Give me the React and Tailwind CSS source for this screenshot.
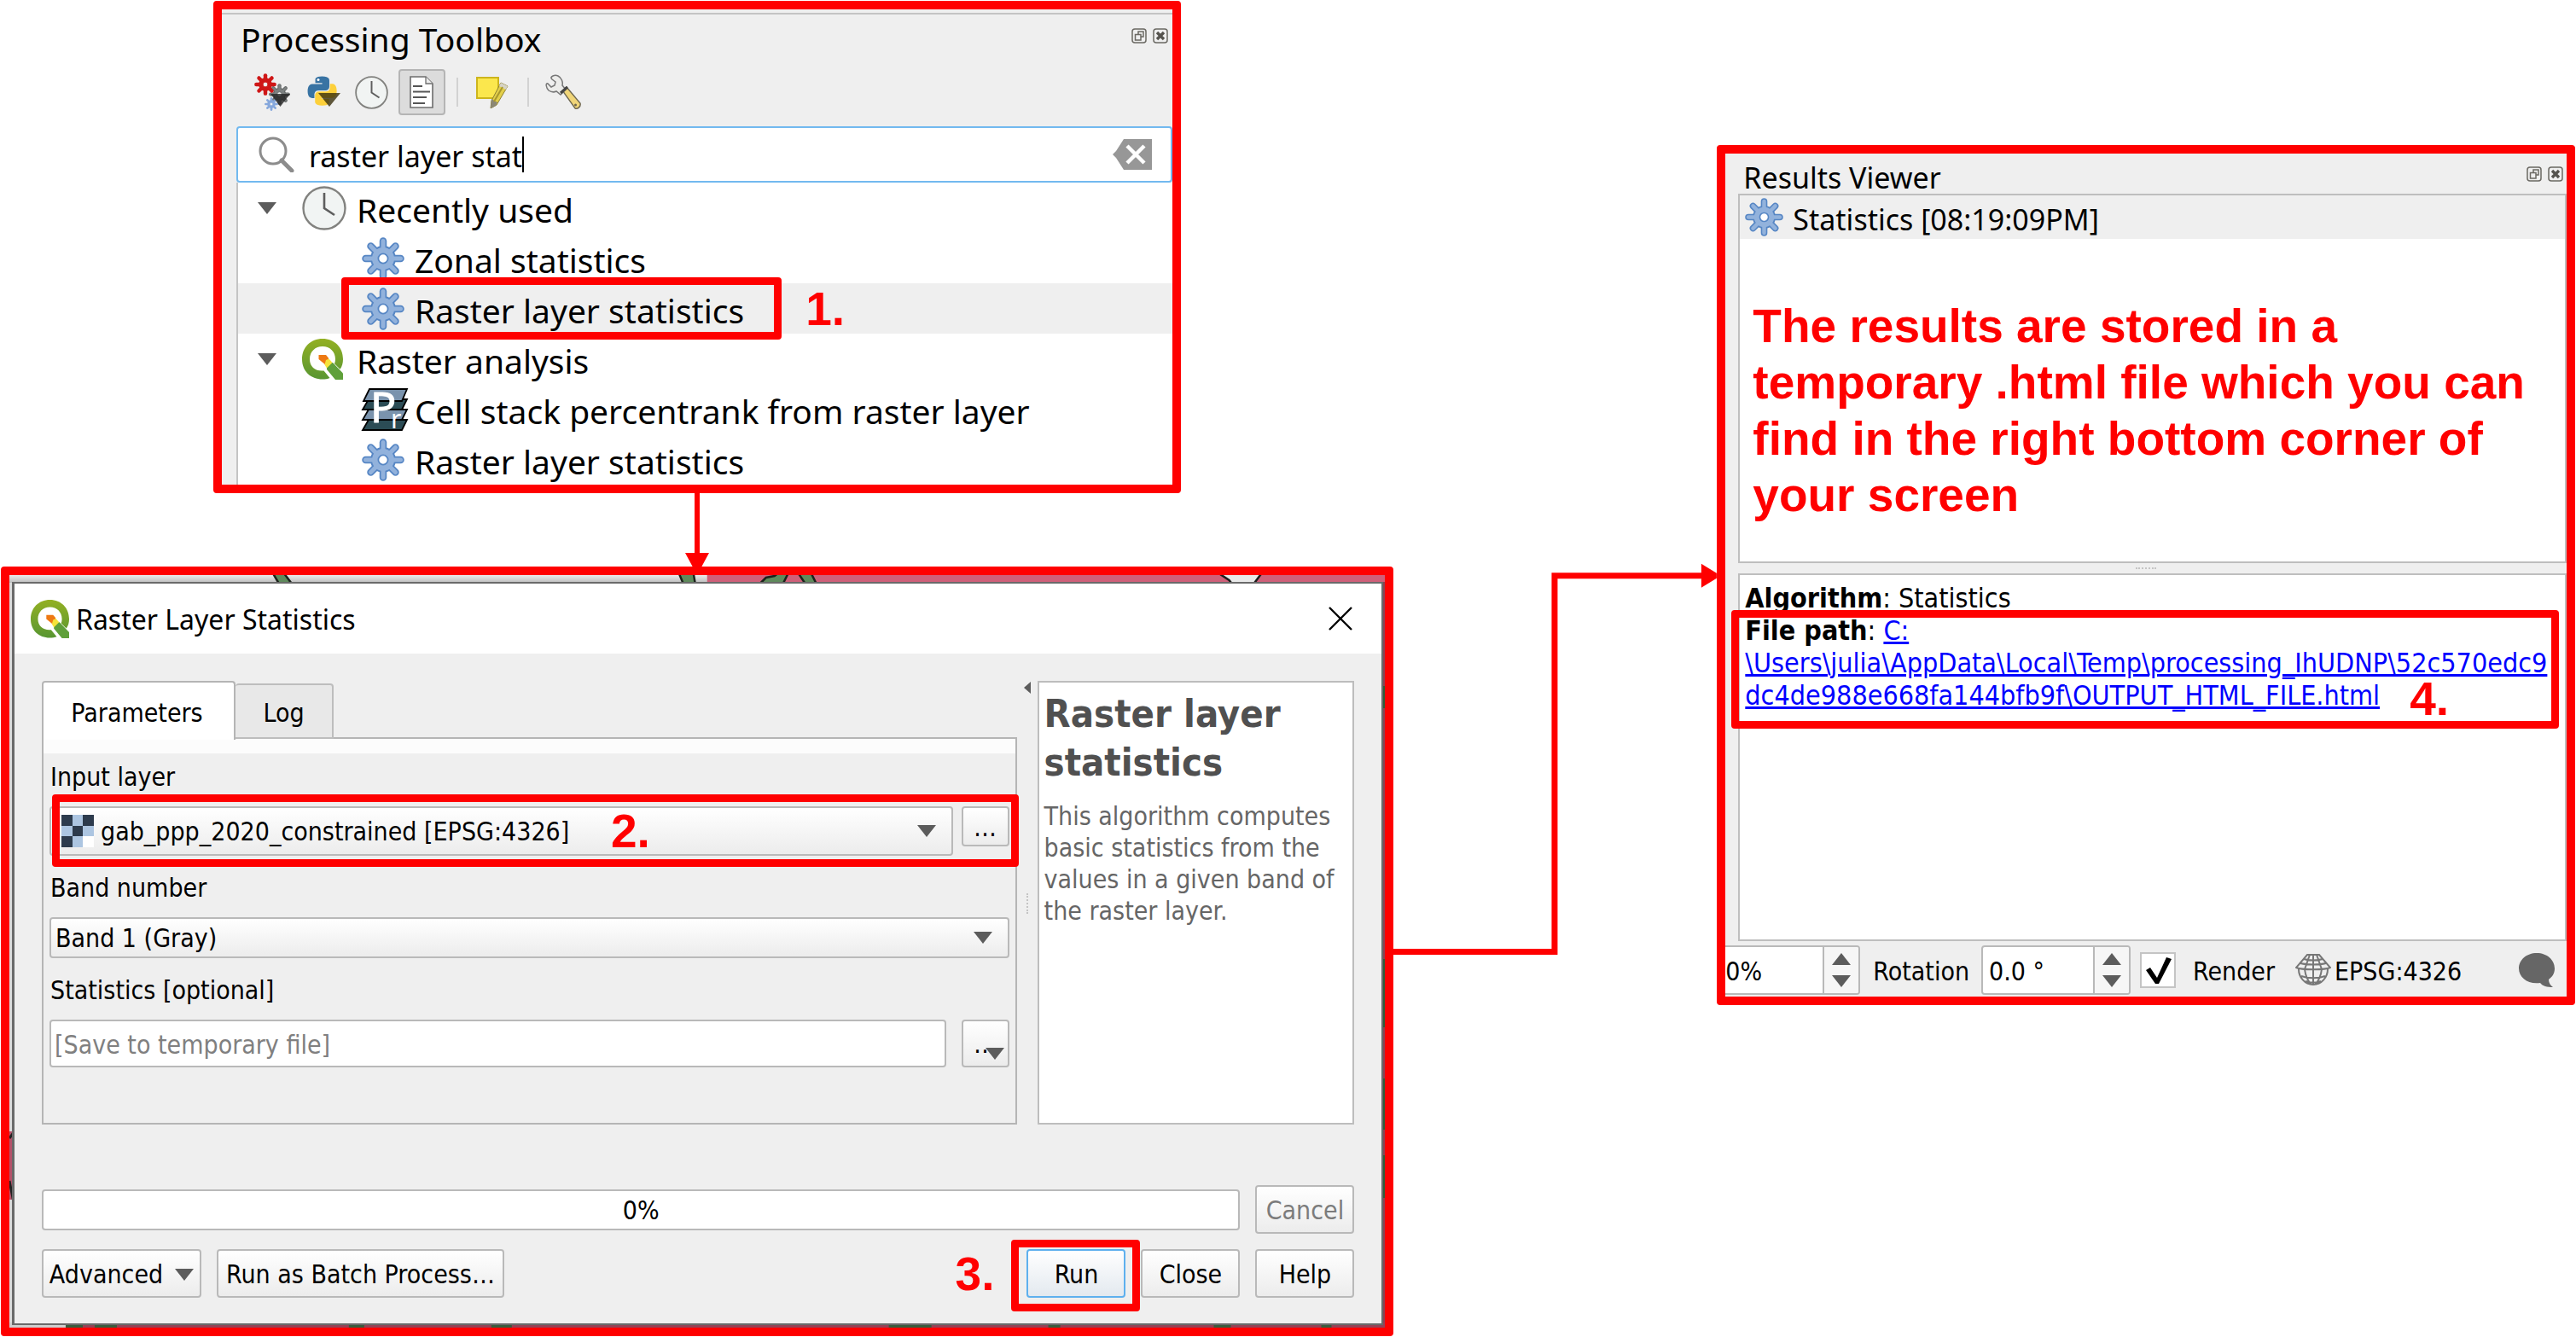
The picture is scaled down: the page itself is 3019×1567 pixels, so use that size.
import React from "react";

const UI = "font-['DejaVu_Sans_Condensed','DejaVu_Sans',sans-serif] text-[30px] leading-9";
const BTN =
  "flex h-[57px] items-center justify-center rounded border-2 border-[#b9b9b9] bg-linear-to-b from-white to-[#ececec] pt-[2px]";
const MARK = "pointer-events-none absolute rounded border-[9px] border-[#ff0000]";
const NOTE = "font-['Liberation_Sans',Arial,sans-serif] text-[55px] font-bold text-[#ff0000]";

function Triangle({ className = "", up = false }) {
  return (
    <svg viewBox="0 0 22 14" className={"h-[14px] w-[22px] shrink-0 " + className} aria-hidden="true">
      <path d={up ? "M0 14h22L11 0z" : "M0 0h22L11 14z"} fill="#5c5c5c" />
    </svg>
  );
}

const SPOKES = [0, 45, 90, 135, 180, 225, 270, 315];

function GearShape({ edge, fill, hole = "#fff" }) {
  return (
    <g>
      {SPOKES.map((a) => (
        <line key={a} x1="25" y1="25" x2="25" y2="4.5" stroke={edge} strokeWidth="8.5" strokeLinecap="round" transform={`rotate(${a} 25 25)`} />
      ))}
      <circle cx="25" cy="25" r="15" fill={edge} />
      <circle cx="25" cy="25" r="13" fill={fill} />
      {SPOKES.map((a) => (
        <line key={a} x1="25" y1="14" x2="25" y2="4.5" stroke={fill} strokeWidth="5" strokeLinecap="round" transform={`rotate(${a} 25 25)`} />
      ))}
      <circle cx="25" cy="25" r="5.6" fill={hole} stroke={edge} strokeWidth="1.8" />
    </g>
  );
}

function Gear({ className = "size-[50px]" }) {
  return (
    <svg viewBox="0 0 50 50" className={"shrink-0 " + className} aria-hidden="true">
      <GearShape edge="#5686c4" fill="#92b2dc" />
    </svg>
  );
}

function Clock({ className }) {
  return (
    <svg viewBox="0 0 52 52" className={"shrink-0 " + className} aria-hidden="true">
      <circle cx="26" cy="26" r="24.5" fill="#f1f4f3" stroke="#82827f" strokeWidth="2.4" />
      <path d="M26 8v18l12 8" fill="none" stroke="#5e5e5e" strokeWidth="2.6" />
    </svg>
  );
}

function QLogo({ className = "size-12" }) {
  return (
    <svg viewBox="0 0 48 48" className={"shrink-0 " + className} aria-hidden="true">
      <defs>
        <linearGradient id="qgreen" x1="0" y1="0" x2="0" y2="1">
          <stop offset="0" stopColor="#93b023" />
          <stop offset="1" stopColor="#589632" />
        </linearGradient>
      </defs>
      <path
        d="M24 0C10 0 0 10 0 24s10 23.500 24 23.500c3 0 6-.5 8.500-1.500l-7-8.500C16 38.500 9 33 9 24S15.500 9 24 9s15 6 15 15c0 2-.3 3.700-1 5.300l6.500 6.500C47 32.500 48 28.500 48 24 48 10 38 0 24 0z"
        fill="url(#qgreen)"
      />
      <path d="M29 28h7l12 12.500V48h-9L29 36z" fill="#5fa03a" />
      <path d="M19.500 19h8.500l3 3.500v8.500h-3l-8.500-7z" fill="#ee7913" />
      <path d="M28 25l3.500-1.500 4 4.500-6.500 6.500-2.500-4z" fill="#f5e33b" />
    </svg>
  );
}

function PrIcon() {
  return (
    <svg viewBox="0 0 54 50" className="h-[50px] w-[54px] shrink-0 overflow-visible" aria-hidden="true">
      <path d="M8 37h45l-6 12H1z" fill="#2b4c55" stroke="#000" strokeWidth="1.800" />
      <path d="M8 25h45l-6 12H1z" fill="#7a93ad" stroke="#000" strokeWidth="1.800" />
      <path d="M8 13h45l-6 12H1z" fill="#2b4c55" stroke="#000" strokeWidth="1.800" />
      <path d="M9 1h44l-6 14H2z" fill="#7a93ad" stroke="#000" strokeWidth="1.800" />
      <text x="10" y="40" fontSize="50" fill="#fff" stroke="#fff" strokeWidth="1" fontFamily="Noto Sans">
        P<tspan x="34" y="47" fontSize="30" strokeWidth="0">r</tspan>
      </text>
    </svg>
  );
}

function DockButtons() {
  return (
    <div className="flex gap-[7px]">
      <button aria-label="Float" className="size-[18px]">
        <svg viewBox="0 0 18 18" className="size-[18px]" fill="none" stroke="#6b6963" strokeWidth="1.500">
          <rect x="1" y="1" width="16" height="16" rx="3" />
          <path d="M8 7V4h6v6h-3" />
          <rect x="4.500" y="7.500" width="6.500" height="6.500" />
        </svg>
      </button>
      <button aria-label="Close panel" className="size-[18px]">
        <svg viewBox="0 0 18 18" className="size-[18px]" fill="none" stroke="#6b6963" strokeWidth="1.500">
          <rect x="1" y="1" width="16" height="16" rx="3" />
          <path d="M5 5l8 8M13 5l-8 8" stroke="#55534e" strokeWidth="3.400" />
        </svg>
      </button>
    </div>
  );
}

const PY =
  "M11.9 1C6.500 1 6.800 3.400 6.800 3.400v2.500h5.200v.8H4.700S1 6.300 1 12s3.200 5.400 3.200 5.400h1.900v-2.600s-.1-3.200 3.100-3.200h5.200s3 .05 3-2.900V4S17.900 1 11.900 1z";

function Toolbar() {
  return (
    <div className="flex h-[54px] items-center pl-[38px]">
      <button aria-label="Models" className="mr-[19px]">
        <svg viewBox="0 0 42 44" className="h-11 w-[42px]">
          <g transform="translate(17 12) scale(.5)"><GearShape edge="#5f6363" fill="#7d8181" hole="#efefef" /></g>
          <g transform="translate(12 28) scale(.32)"><GearShape edge="#86a8dc" fill="#86a8dc" hole="#efefef" /></g>
          <g transform="translate(0 0) scale(.52)"><GearShape edge="#cf1717" fill="#cf1717" hole="#efefef" /></g>
          <path d="M19 24h23L30.500 39z" fill="#222" fillOpacity=".8" />
        </svg>
      </button>
      <button aria-label="Scripts" className="mr-[17px]">
        <svg viewBox="0 0 40 40" className="size-10">
          <path d={PY} fill="#3873a3" transform="scale(1.550)" />
          <path d={PY} fill="#fdd03b" transform="scale(1.550) rotate(180 12 12)" />
          <circle cx="14" cy="5.500" r="1.500" fill="#fff" />
          <path d="M14 21h26L27 37z" fill="#3a2f0c" fillOpacity=".8" />
        </svg>
      </button>
      <button aria-label="History" className="mr-[12px]">
        <Clock className="size-[39px]" />
      </button>
      <button aria-label="Results Viewer" aria-pressed="true" className="mr-[13px] flex h-[54px] w-[55px] items-center justify-center rounded border-2 border-[#b5b5b5] bg-[#dcdcdc]">
        <svg viewBox="0 0 28 38" className="h-[38px] w-7">
          <path d="M1 1h18l8 8v28H1z" fill="#fff" stroke="#6d6d6d" strokeWidth="1.600" />
          <path d="M19 1v8h8" fill="#ededed" stroke="#6d6d6d" strokeWidth="1.300" />
          <path d="M4 12h11M4 18.500h20M4 25h16M4 32h14" stroke="#555" strokeWidth="1.800" />
        </svg>
      </button>
      <span className="mr-[21px] h-[34px] w-[2px] bg-[#d2d2d2]" />
      <button aria-label="Edit Features In-Place" className="mr-[22px]">
        <svg viewBox="0 0 38 38" className="size-[38px]">
          <rect x="1" y="2" width="25" height="24" fill="#fbe74d" stroke="#cdb51c" strokeWidth="2" />
          <path d="M29 8l8 4-13 22-7 4 1-9z" fill="#e3cf4a" stroke="#8d8132" strokeWidth="1" />
          <path d="M29 8l8 4-2 4-8-4z" fill="#d6d3c6" />
          <path d="M18 27l7 4-2 4-6 3z" fill="#8b8776" />
          <path d="M31 13L21 30" stroke="#a8982d" strokeWidth="2" />
        </svg>
      </button>
      <span className="mr-[19px] h-[34px] w-[2px] bg-[#d2d2d2]" />
      <button aria-label="Options">
        <svg viewBox="0 0 42 42" className="size-[42px]">
          <path d="M20 19l5-4 16 19c1 4-3 7-6 6z" fill="#f0d578" stroke="#6d6650" strokeWidth="1.400" />
          <path d="M9 2c-2 1-3 2-1 4l4 3-1 4-4 2-4-4c-3-1-2 5 1 8 3 2 7 2 9 1l5 4 6-6-4-5c1-4-1-9-5-11-2-1-4-1-6 0z" fill="#ececea" stroke="#777" strokeWidth="1.500" />
          <path d="M18 22l8-7" stroke="#444" strokeWidth="3" />
          <circle cx="35.500" cy="36" r="1.500" fill="#6d6650" />
        </svg>
      </button>
    </div>
  );
}

function Group({ icon, label, children }) {
  return (
    <li>
      <div className="flex h-[59px] items-center pl-[21px]">
        <button aria-label={"Collapse " + label} className="mr-[28px]">
          <Triangle className="h-4 w-[26px]" />
        </button>
        <span className="flex w-16 items-center">{icon}</span>
        <span className="pt-1">{label}</span>
      </div>
      <ul>{children}</ul>
    </li>
  );
}

function Item({ icon = <Gear />, label, selected = false }) {
  return (
    <li className={"flex h-[59px] items-center pl-[145px] " + (selected ? "bg-[#efefef]" : "")}>
      <span className="relative flex items-center">
        <span className="flex w-[62px] items-center">{icon}</span>
        <span className="pt-1">{label}</span>
        {selected && <span className={MARK + " -top-[10px] -right-[44px] -bottom-[9px] -left-6"} />}
      </span>
      {selected && <span className={NOTE + " ml-[72px] leading-[58px]"}>1.</span>}
    </li>
  );
}

function Toolbox() {
  return (
    <section className="mt-px rounded border-10 border-[#ff0000] bg-[#efefef] font-['Noto_Sans',sans-serif] text-[39px] leading-[50px] text-black">
      <div className="mt-1 border-t-2 border-[#c4c4c4]" />
      <header className="flex h-16 items-start justify-between pr-[5px] pl-[22px]">
        <h1 className="mt-1">Processing Toolbox</h1>
        <div className="mt-4"><DockButtons /></div>
      </header>
      <Toolbar />
      <div className="mt-[13px] ml-[17px] flex h-[66px] items-center rounded border-2 border-[#72b9ef] bg-white pr-[21px] pl-6">
        <svg viewBox="0 0 42 42" className="mr-[17px] size-[42px]" fill="none" stroke="#8c8c8c" aria-hidden="true">
          <circle cx="17" cy="17" r="15" strokeWidth="3" />
          <path d="M27 28l12 12" strokeWidth="5" strokeLinecap="round" />
        </svg>
        <input aria-label="Search" defaultValue="raster layer stat" className="field-sizing-content h-14 pt-1 text-[34px] outline-none" />
        <span className="h-[42px] w-[2px] bg-black" />
        <button aria-label="Clear search" className="ml-auto">
          <svg viewBox="0 0 47 36" className="h-9 w-[47px]">
            <path d="M13 0h33v36H13L4 22l-4-4 4-4z" fill="#979797" />
            <path d="M17 8l20 20M37 8L17 28" stroke="#fff" strokeWidth="4.500" />
          </svg>
        </button>
      </div>
      <ul className="ml-[17px] border-l-2 border-[#c4c4c4] bg-white">
        <Group label="Recently used" icon={<Clock className="size-[52px]" />}>
          <Item label="Zonal statistics" />
          <Item label="Raster layer statistics" selected />
        </Group>
        <Group label="Raster analysis" icon={<QLogo />}>
          <Item label="Cell stack percentrank from raster layer" icon={<PrIcon />} />
          <Item label="Raster layer statistics" />
        </Group>
      </ul>
    </section>
  );
}

function MapBackdrop() {
  return (
    <svg viewBox="0 0 1613 882" preserveAspectRatio="none" className="absolute inset-0 size-full" aria-hidden="true">
      <defs>
        <linearGradient id="edge" x1="0" y1="0" x2="0" y2="1">
          <stop offset="0" stopColor="#ececec" />
          <stop offset="1" stopColor="#bdbdbd" />
        </linearGradient>
      </defs>
      <rect width="1613" height="882" fill="#dcdcdc" />
      <rect width="818" height="9" fill="url(#edge)" />
      <rect x="818" width="795" height="9" fill="#cf6079" />
      <g fill="#5f8a5c" stroke="#1c221c" strokeWidth="2.500">
        <path d="M309 -2l7 12h15l-9 -12zM785 -2l5 12h14l-2 -12zM880 10l7-7 10-2 4-3h12l-6 12zM925 -2l8 12h13l-6 -12z" />
      </g>
      <path d="M1418 -2l12 8 4 5 25-1 9-12z" fill="#e9e9e9" stroke="#1c1c1c" strokeWidth="2.500" />
      <rect y="652" width="6" height="80" fill="#b5526a" />
      <path d="M0 660l6-8M0 710l6 30v60" fill="none" stroke="#222" strokeWidth="3" />
      <rect x="1608" y="8" width="5" height="874" fill="#8c4353" />
      <path d="M1612 130v26M1612 450v80M1612 590v60M1612 680v50" stroke="#2f5d38" strokeWidth="4" />
      <rect y="876" width="1613" height="6" fill="#974256" />
      <rect y="876" width="66" height="6" fill="#cfcfcf" />
      <path d="M66 880h20M100 880h26M398 880h18M565 880h24M1031 880h50M1218 880h14M1412 880h20M1538 880h12" stroke="#3a5c3d" strokeWidth="6" />
    </svg>
  );
}

function FormLabel({ children, ...rest }) {
  return <label className="mt-5 mb-4 block pl-px" {...rest}>{children}</label>;
}

function Parameters() {
  return (
    <div>
      <div className="flex h-[66px] items-end">
        <button className="z-10 -mb-[3px] h-[69px] w-[227px] rounded-t border-2 border-b-0 border-[#b5b5b5] bg-white pt-1 pr-1">Parameters</button>
        <button className="-mb-[2px] h-[65px] w-[115px] rounded-t border-2 border-l-0 border-[#bdbdbd] bg-[#e8e8e8] pt-1">Log</button>
      </div>
      <div className="min-h-[454px] border-2 border-[#b5b5b5]">
        <div className="h-[17px] bg-[#fcfcfc]" />
        <div className="-mt-[10px] px-[7px]">
          <FormLabel htmlFor="layer">Input layer</FormLabel>
          <div className="relative flex items-start gap-[10px]">
            <div className="relative flex h-[58px] flex-1 items-center rounded border-2 border-[#b9b9b9] bg-linear-to-b from-white to-[#ececec] pl-3">
              <svg viewBox="0 0 3 3" className="mr-1 size-[38px]" shapeRendering="crispEdges" aria-hidden="true">
                <path d="M0 0h3v3H0z" fill="#acc5e1" />
                <path d="M0 0h1v1H0zM2 0h1v1H2zM1 1h1v1H1zM0 2h1v1H0z" fill="#2d3b4d" />
                <path d="M2 2h1v1H2z" fill="#fff" />
              </svg>
              <select id="layer" className="h-full flex-1 appearance-none bg-transparent pt-[2px] pl-1 outline-none">
                <option>gab_ppp_2020_constrained [EPSG:4326]</option>
              </select>
              <Triangle className="pointer-events-none absolute right-[18px]" />
              <span className={NOTE + " pointer-events-none absolute left-[656px] leading-[54px]"}>2.</span>
            </div>
            <button aria-label="Browse input layer" className={BTN + " !h-[47px] w-14"}>…</button>
            <span className={MARK + " -top-[14px] -right-[11px] -bottom-[13px] left-[3px]"} />
          </div>
          <FormLabel htmlFor="band">Band number</FormLabel>
          <div className="relative flex items-center">
            <select id="band" className="h-12 flex-1 appearance-none rounded border-2 border-[#b9b9b9] bg-linear-to-b from-white to-[#ececec] px-[5px] pt-[2px] outline-none">
              <option>Band 1 (Gray)</option>
            </select>
            <Triangle className="pointer-events-none absolute right-5" />
          </div>
          <FormLabel htmlFor="stats">Statistics [optional]</FormLabel>
          <div className="flex gap-[18px]">
            <input id="stats" placeholder="[Save to temporary file]" className="h-14 min-w-0 flex-1 rounded border-2 border-[#b9b9b9] bg-white px-1 pt-[2px] outline-none placeholder:text-[#808080]" />
            <button aria-label="Choose output" className={BTN + " relative !h-14 w-14"}>
              …<Triangle className="absolute right-1 bottom-[7px]" />
            </button>
          </div>
        </div>
      </div>
    </div>
  );
}

function StatisticsDialog() {
  return (
    <section className={UI + " relative rounded border-10 border-[#ff0000] text-black"}>
      <MapBackdrop />
      <div className="relative mt-2 mr-[2px] mb-[3px] ml-[3px] border-2 border-l-[3px] border-[#6a6a6a] bg-[#efefef]">
        <header className="flex h-[82px] items-center bg-white pr-[34px] pl-[19px]">
          <QLogo className="mr-2 size-[45px]" />
          <h2 className="pt-[2px] font-['Noto_Sans',sans-serif] text-[32px]">Raster Layer Statistics</h2>
          <button aria-label="Close dialog" className="ml-auto">
            <svg viewBox="0 0 28 28" className="size-7" stroke="#000" strokeWidth="2.400"><path d="M1 1l26 26M27 1L1 27" /></svg>
          </button>
        </header>
        <div className="px-8 pt-8 pb-[30px]">
          <div className="grid grid-cols-[1143fr_24px_372fr]">
            <Parameters />
            <div className="flex flex-col items-center">
              <svg viewBox="0 0 8 14" className="mt-[1px] h-[14px] w-2"><path d="M8 0v14L0 7z" fill="#5c5c5c" /></svg>
              <span className="mt-[234px] h-6 border-l-2 border-dotted border-[#c4c4c4]" />
            </div>
            <aside className="border-2 border-[#bdbdbd] bg-white pt-2 pr-3 pl-[6px] leading-[37px] text-[#666]">
              <h3 className="mb-4 text-[45px] leading-[57px] font-bold text-[#505050]">Raster layer statistics</h3>
              <p>This algorithm computes basic statistics from the values in a given band of the raster layer.</p>
            </aside>
          </div>
          <div className="mt-[71px] flex items-center gap-[18px]">
            <div role="progressbar" aria-valuenow={0} aria-valuemin={0} aria-valuemax={100} className="flex h-12 flex-1 items-center justify-center rounded border-2 border-[#b9b9b9] bg-white pt-[2px]">0%</div>
            <button disabled className={BTN + " w-[116px] text-[#7c7c7c]"}>Cancel</button>
          </div>
          <div className="mt-[18px] flex items-center gap-[18px]">
            <button className={BTN + " w-[187px] gap-[14px]"}>Advanced<Triangle /></button>
            <button className={BTN + " w-[337px]"}>Run as Batch Process…</button>
            <span className={NOTE + " mr-5 ml-auto leading-[56px]"}>3.</span>
            <div className="relative">
              <button className="flex h-[57px] w-[116px] items-center justify-center rounded border-2 border-[#5eb0ee] bg-linear-to-b from-white to-[#e3e9ef] pt-[2px]">Run</button>
              <span className={MARK + " -top-[11px] -right-[17px] -bottom-4 -left-[18px]"} />
            </div>
            <button className={BTN + " w-[116px]"}>Close</button>
            <button className={BTN + " w-[116px]"}>Help</button>
          </div>
        </div>
      </div>
    </section>
  );
}

function Spin({ label, value, className }) {
  return (
    <div className={"flex h-[58px] overflow-hidden rounded-r border-2 border-[#b9b9b9] bg-white " + className}>
      <input aria-label={label} defaultValue={value} className="min-w-0 flex-1 pt-1 outline-none" />
      <div className="flex w-[42px] flex-col items-center justify-center gap-3 border-l-2 border-[#b9b9b9] bg-[#f6f6f6]">
        <button aria-label={label + " up"} className="flex"><Triangle up className="w-6" /></button>
        <button aria-label={label + " down"} className="flex"><Triangle className="w-6" /></button>
      </div>
    </div>
  );
}

function ResultsViewer() {
  return (
    <section className={UI + " mt-[170px] rounded border-10 border-[#ff0000] bg-[#efefef] text-black"}>
      <header className="flex h-[47px] items-center justify-between pr-1 pl-[21px] font-['Noto_Sans',sans-serif] text-[34px]">
        <h2 className="pt-2">Results Viewer</h2>
        <DockButtons />
      </header>
      <div className="ml-[15px] min-h-[433px] border-2 border-[#bebebe] bg-white">
        <div className="flex h-[51px] items-center bg-[#efefef] pl-[6px] font-['Noto_Sans',sans-serif] text-[34px]">
          <Gear className="mr-[11px] size-[45px]" />
          <span className="pt-1">Statistics [08:19:09PM]</span>
        </div>
        <p className={NOTE + " mt-[69px] pr-5 pl-[15px] leading-[66px]"}>
          The results are stored in a temporary .html file which you can find in the right bottom corner of your screen
        </p>
      </div>
      <div className="flex h-3 items-center justify-center">
        <span className="w-6 border-t-2 border-dotted border-[#c4c4c4]" />
      </div>
      <div className="relative ml-[15px] min-h-[431px] border-2 border-[#bebebe] bg-white pt-2 pl-[6px] text-[32px] leading-[38px]">
        <p><b>Algorithm</b>: Statistics</p>
        <p className="whitespace-nowrap">
          <b>File path</b>:{" "}
          <a href="#output" className="text-[#0000ff] underline">
            C:<br />\Users\julia\AppData\Local\Temp\processing_IhUDNP\52c570edc9<br />dc4de988e668fa144bfb9f\OUTPUT_HTML_FILE.html
          </a>
        </p>
        <span className={MARK + " top-[41px] right-[7px] -left-[10px] h-[139px]"} />
        <span className={NOTE + " absolute top-[121px] right-[136px] leading-[48px]"}>4.</span>
      </div>
      <footer className="flex h-[65px] items-center pt-[2px]">
        <Spin label="Magnifier" value="0%" className="w-[158px] border-l-0" />
        <label htmlFor="rotation" className="mr-[14px] ml-[15px] pt-1">Rotation</label>
        <Spin label="Rotation value" value="0.0 °" className="w-[175px] rounded-l pl-[7px]" />
        <label className="ml-[11px] flex items-center gap-5">
          <span className="relative flex size-[42px]">
            <input type="checkbox" defaultChecked className="size-[42px] appearance-none border-2 border-[#c4c4c4] bg-white" />
            <svg viewBox="0 0 42 42" className="pointer-events-none absolute inset-0"><path d="M7 21l5-3 8 12L31 6l6 2-15 29h-4z" fill="#000" /></svg>
          </span>
          <span className="pt-1">Render</span>
        </label>
        <button className="ml-6 flex items-center gap-1">
          <svg viewBox="0 0 42 38" className="h-[38px] w-[42px]" fill="none" stroke="#777" strokeWidth="2" aria-hidden="true">
            <path d="M14 1h14l13 15c-6 3-34 3-40 0z" />
            <path d="M10 6c6 2 16 2 22 0M6 11c8 2 22 2 30 0M17 1l-6 17M25 1l6 17M21 1v35" />
            <path d="M4 18c0 9 7 18 17 18s17-9 17-18M7 26c8 3 20 3 28 0M12 32c6 2 12 2 18 0M11 18c1 8 4 14 8 18M31 18c-1 8-4 14-8 18" />
          </svg>
          <span className="pt-1">EPSG:4326</span>
        </button>
        <button aria-label="Messages" className="mr-[13px] ml-auto">
          <svg viewBox="0 0 44 40" className="h-10 w-11"><path d="M22 0c12 0 21 8 21 18 0 6-3 10-7 13 0 4 2 7 5 9-7 0-12-1-15-5C12 37 1 29 1 18 1 8 10 0 22 0z" fill="#666" /></svg>
        </button>
      </footer>
    </section>
  );
}

export default function App() {
  return (
    <main className="grid grid-cols-[1633fr_379fr_1006fr] items-start bg-white pr-px pl-px">
      <div>
        <div className="grid grid-cols-[249fr_1134fr_250fr]">
          <div className="col-start-2"><Toolbox /></div>
        </div>
        <div className="flex justify-center">
          <svg viewBox="0 0 28 96" className="-mb-[10px] h-24 w-7" aria-hidden="true">
            <path d="M11 0h6v70h11L14 96 0 70h11z" fill="#ff0000" />
          </svg>
        </div>
        <StatisticsDialog />
      </div>
      <svg viewBox="0 0 379 1200" className="w-full" aria-hidden="true">
        <path d="M0 1116H189V675H364" fill="none" stroke="#ff0000" strokeWidth="7" />
        <path d="M361 661l18 11v6l-18 11z" fill="#ff0000" />
      </svg>
      <ResultsViewer />
    </main>
  );
}
